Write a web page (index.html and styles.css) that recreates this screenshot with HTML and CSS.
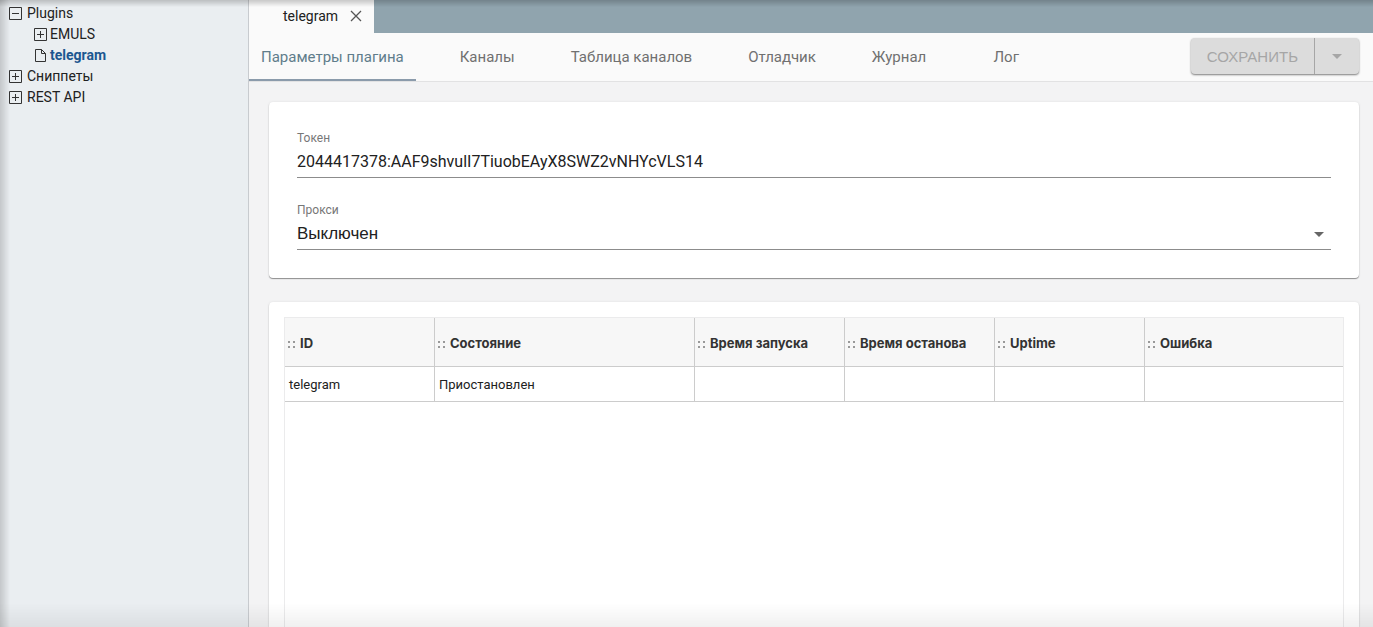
FILE: index.html
```html
<!DOCTYPE html>
<html lang="ru">
<head>
<meta charset="utf-8">
<title>telegram</title>
<link rel="stylesheet" href="styles.css">
</head>
<body>
<div class="app">
  <aside class="sidebar">
    <ul class="tree">
      <li>
        <button class="node" type="button"><svg class="icon" viewBox="0 0 13 13"><path d="M.5.5h12v12H.5zM3 6.5h7"/></svg>Plugins</button>
        <ul class="tree nested">
          <li><button class="node" type="button"><svg class="icon" viewBox="0 0 13 13"><path d="M.5.5h12v12H.5zM3 6.5h7M6.5 3v7"/></svg>EMULS</button></li>
          <li><button class="node selected" type="button"><svg class="icon" viewBox="0 0 13 13"><path d="M1.500.5H7.500L11.500 4.500V12.500H1.500zM7.500.5V4.500H11.500"/></svg>telegram</button></li>
        </ul>
      </li>
      <li><button class="node" type="button"><svg class="icon" viewBox="0 0 13 13"><path d="M.5.5h12v12H.5zM3 6.5h7M6.5 3v7"/></svg>Сниппеты</button></li>
      <li><button class="node" type="button"><svg class="icon" viewBox="0 0 13 13"><path d="M.5.5h12v12H.5zM3 6.5h7M6.5 3v7"/></svg>REST API</button></li>
    </ul>
  </aside>
  <main class="workspace">
    <div class="filebar">
      <div class="file">
        <span>telegram</span>
        <button class="close" type="button" aria-label="Закрыть"><svg viewBox="0 0 12 12"><path d="M1 1l10 10M11 1L1 11"/></svg></button>
      </div>
    </div>
    <div class="toolbar">
      <nav class="tabs">
        <button class="tab active" type="button">Параметры плагина</button>
        <button class="tab" type="button">Каналы</button>
        <button class="tab" type="button">Таблица каналов</button>
        <button class="tab" type="button">Отладчик</button>
        <button class="tab" type="button">Журнал</button>
        <button class="tab" type="button">Лог</button>
      </nav>
      <div class="save-group">
        <button class="save" type="button" disabled>СОХРАНИТЬ</button>
        <button class="save more" type="button" disabled aria-label="Ещё"><svg class="caret" viewBox="0 0 10 5"><path d="M0 0h10L5 5z"/></svg></button>
      </div>
    </div>
    <div class="content">
      <section class="card form">
        <div class="field">
          <label for="token">Токен</label>
          <input id="token" class="control" type="text" value="2044417378:AAF9shvulI7TiuobEAyX8SWZ2vNHYcVLS14">
        </div>
        <div class="field">
          <label for="proxy">Прокси</label>
          <div class="select-wrap">
            <select id="proxy" class="control select"><option>Выключен</option></select>
            <svg class="caret" viewBox="0 0 10 5"><path d="M0 0h10L5 5z"/></svg>
          </div>
        </div>
      </section>
      <section class="card grid-card">
        <div class="grid">
          <table>
            <colgroup><col class="col"><col class="col-wide"><col class="col"><col class="col"><col class="col"><col></colgroup>
            <thead>
              <tr><th>ID</th><th>Состояние</th><th>Время запуска</th><th>Время останова</th><th>Uptime</th><th>Ошибка</th></tr>
            </thead>
            <tbody>
              <tr><td>telegram</td><td>Приостановлен</td><td></td><td></td><td></td><td></td></tr>
            </tbody>
          </table>
        </div>
      </section>
    </div>
  </main>
  <div class="edge-shade"></div>
</div>
</body>
</html>
```
FILE: styles.css
```css
* { box-sizing: border-box; }
body {
  margin: 0;
  font-family: Roboto, "Liberation Sans", sans-serif;
  font-size: 14px;
  color: #212121;
}
button, input, select { font: inherit; color: inherit; }
button { border: 0; padding: 0; background: none; }
.app { display: flex; height: 100vh; overflow: hidden; }

.sidebar {
  flex: 0 0 249px;
  padding: 3px 9px;
  background: #eaeef1;
  border-right: 1px solid #c8cbcf;
}
.tree { list-style: none; margin: 0; padding: 0; }
.nested { padding-left: 25px; }
.nested .node { gap: 3px; }
.node { display: flex; align-items: center; gap: 5px; height: 21px; line-height: 21px; }
.selected { color: #1c5790; font-weight: 700; }
.icon { width: 13px; height: 13px; fill: none; stroke: #333; }

.workspace { flex: 1; min-width: 0; display: flex; flex-direction: column; background: #f3f3f4; }
.filebar { display: flex; height: 33px; background: #90a4ae; }
.file {
  display: flex;
  align-items: center;
  gap: 12px;
  padding: 0 12px 1px 34px;
  background: #fafafa;
}
.close { display: flex; }
.close svg { width: 12px; height: 12px; fill: none; stroke: #555; stroke-width: 1.3; }

.toolbar {
  display: flex;
  justify-content: space-between;
  height: 49px;
  padding-right: 14px;
  background: #fafafa;
  border-bottom: 1px solid #e2e2e3;
}
.tabs { display: flex; gap: 32px; }
.tab {
  min-width: 72px;
  padding: 2px 12px 0;
  font-size: 15px;
  color: #707070;
  border-bottom: 2px solid transparent;
}
.tab.active { color: #607d8b; border-color: #8b9bab; }
.save-group {
  display: flex;
  height: 36px;
  margin-top: 5px;
  border-radius: 4px;
  background: #dcdcdc;
  box-shadow: 0 1px 2px rgba(0, 0, 0, 0.5);
}
.save { padding: 0 16px; font-family: "Liberation Sans", sans-serif; font-size: 15px; color: #a6a6a6; }
.more { display: flex; align-items: center; justify-content: center; width: 45px; border-left: 1px solid #a6a6a6; }
.caret { flex: none; width: 10px; height: 5px; fill: currentColor; }

.content { flex: 1; min-height: 0; display: flex; flex-direction: column; gap: 24px; padding: 20px 14px 0 20px; }
.card { background: #fff; border-radius: 4px; box-shadow: 0 1px 1px rgba(0, 0, 0, 0.4), 0 0 3px rgba(0, 0, 0, 0.08); }
.form { display: flex; flex-direction: column; gap: 24px; padding: 28px; }
.field { display: flex; flex-direction: column; }
.field label { font-size: 12px; line-height: 16px; color: #777; }
.control {
  width: 100%;
  height: 32px;
  padding: 0;
  border: 0;
  border-bottom: 1px solid #8c8c8c;
  border-radius: 0;
  background: none;
  font-size: 16px;
  outline: 0;
}
.select { appearance: none; font-family: "Liberation Sans", sans-serif; font-size: 17px; }
.select-wrap { position: relative; color: #666; }
.select-wrap .select { color: #212121; }
.select-wrap .caret { position: absolute; right: 7px; top: 14px; pointer-events: none; }

.grid-card { flex: 1; display: flex; padding: 15px 15px 0; border-radius: 4px 4px 0 0; }
.grid { flex: 1; border: 1px solid #ebebec; border-bottom: 0; }
table { width: 100%; table-layout: fixed; border-collapse: separate; border-spacing: 0; font-size: 13px; }
.col { width: 150px; }
.col-wide { width: 260px; }
th, td { padding: 0 4px; text-align: left; border-bottom: 1px solid #ccc; border-right: 1px solid #ccc; }
th:last-child, td:last-child { border-right: 0; }
th {
  height: 49px;
  padding: 2px 3px 0;
  background: #f7f7f7;
  color: #333;
  font-family: Inter, sans-serif;
  font-weight: 700;
}
th::before {
  content: "";
  display: inline-block;
  width: 7px;
  height: 7px;
  margin-right: 5px;
  background:
    linear-gradient(#999, #999) 0 0 / 2px 2px no-repeat,
    linear-gradient(#999, #999) 5px 0 / 2px 2px no-repeat,
    linear-gradient(#999, #999) 0 5px / 2px 2px no-repeat,
    linear-gradient(#999, #999) 5px 5px / 2px 2px no-repeat;
}
td { height: 35px; }

.edge-shade {
  position: fixed;
  inset: 0;
  pointer-events: none;
  background:
    linear-gradient(to bottom, rgba(0, 0, 0, 0.2), transparent) top / 100% 7px no-repeat,
    linear-gradient(to right, rgba(0, 0, 0, 0.16), transparent) left / 10px 100% no-repeat,
    linear-gradient(to top, rgba(0, 0, 0, 0.06), transparent) bottom left / 100% 24px no-repeat;
}
```
